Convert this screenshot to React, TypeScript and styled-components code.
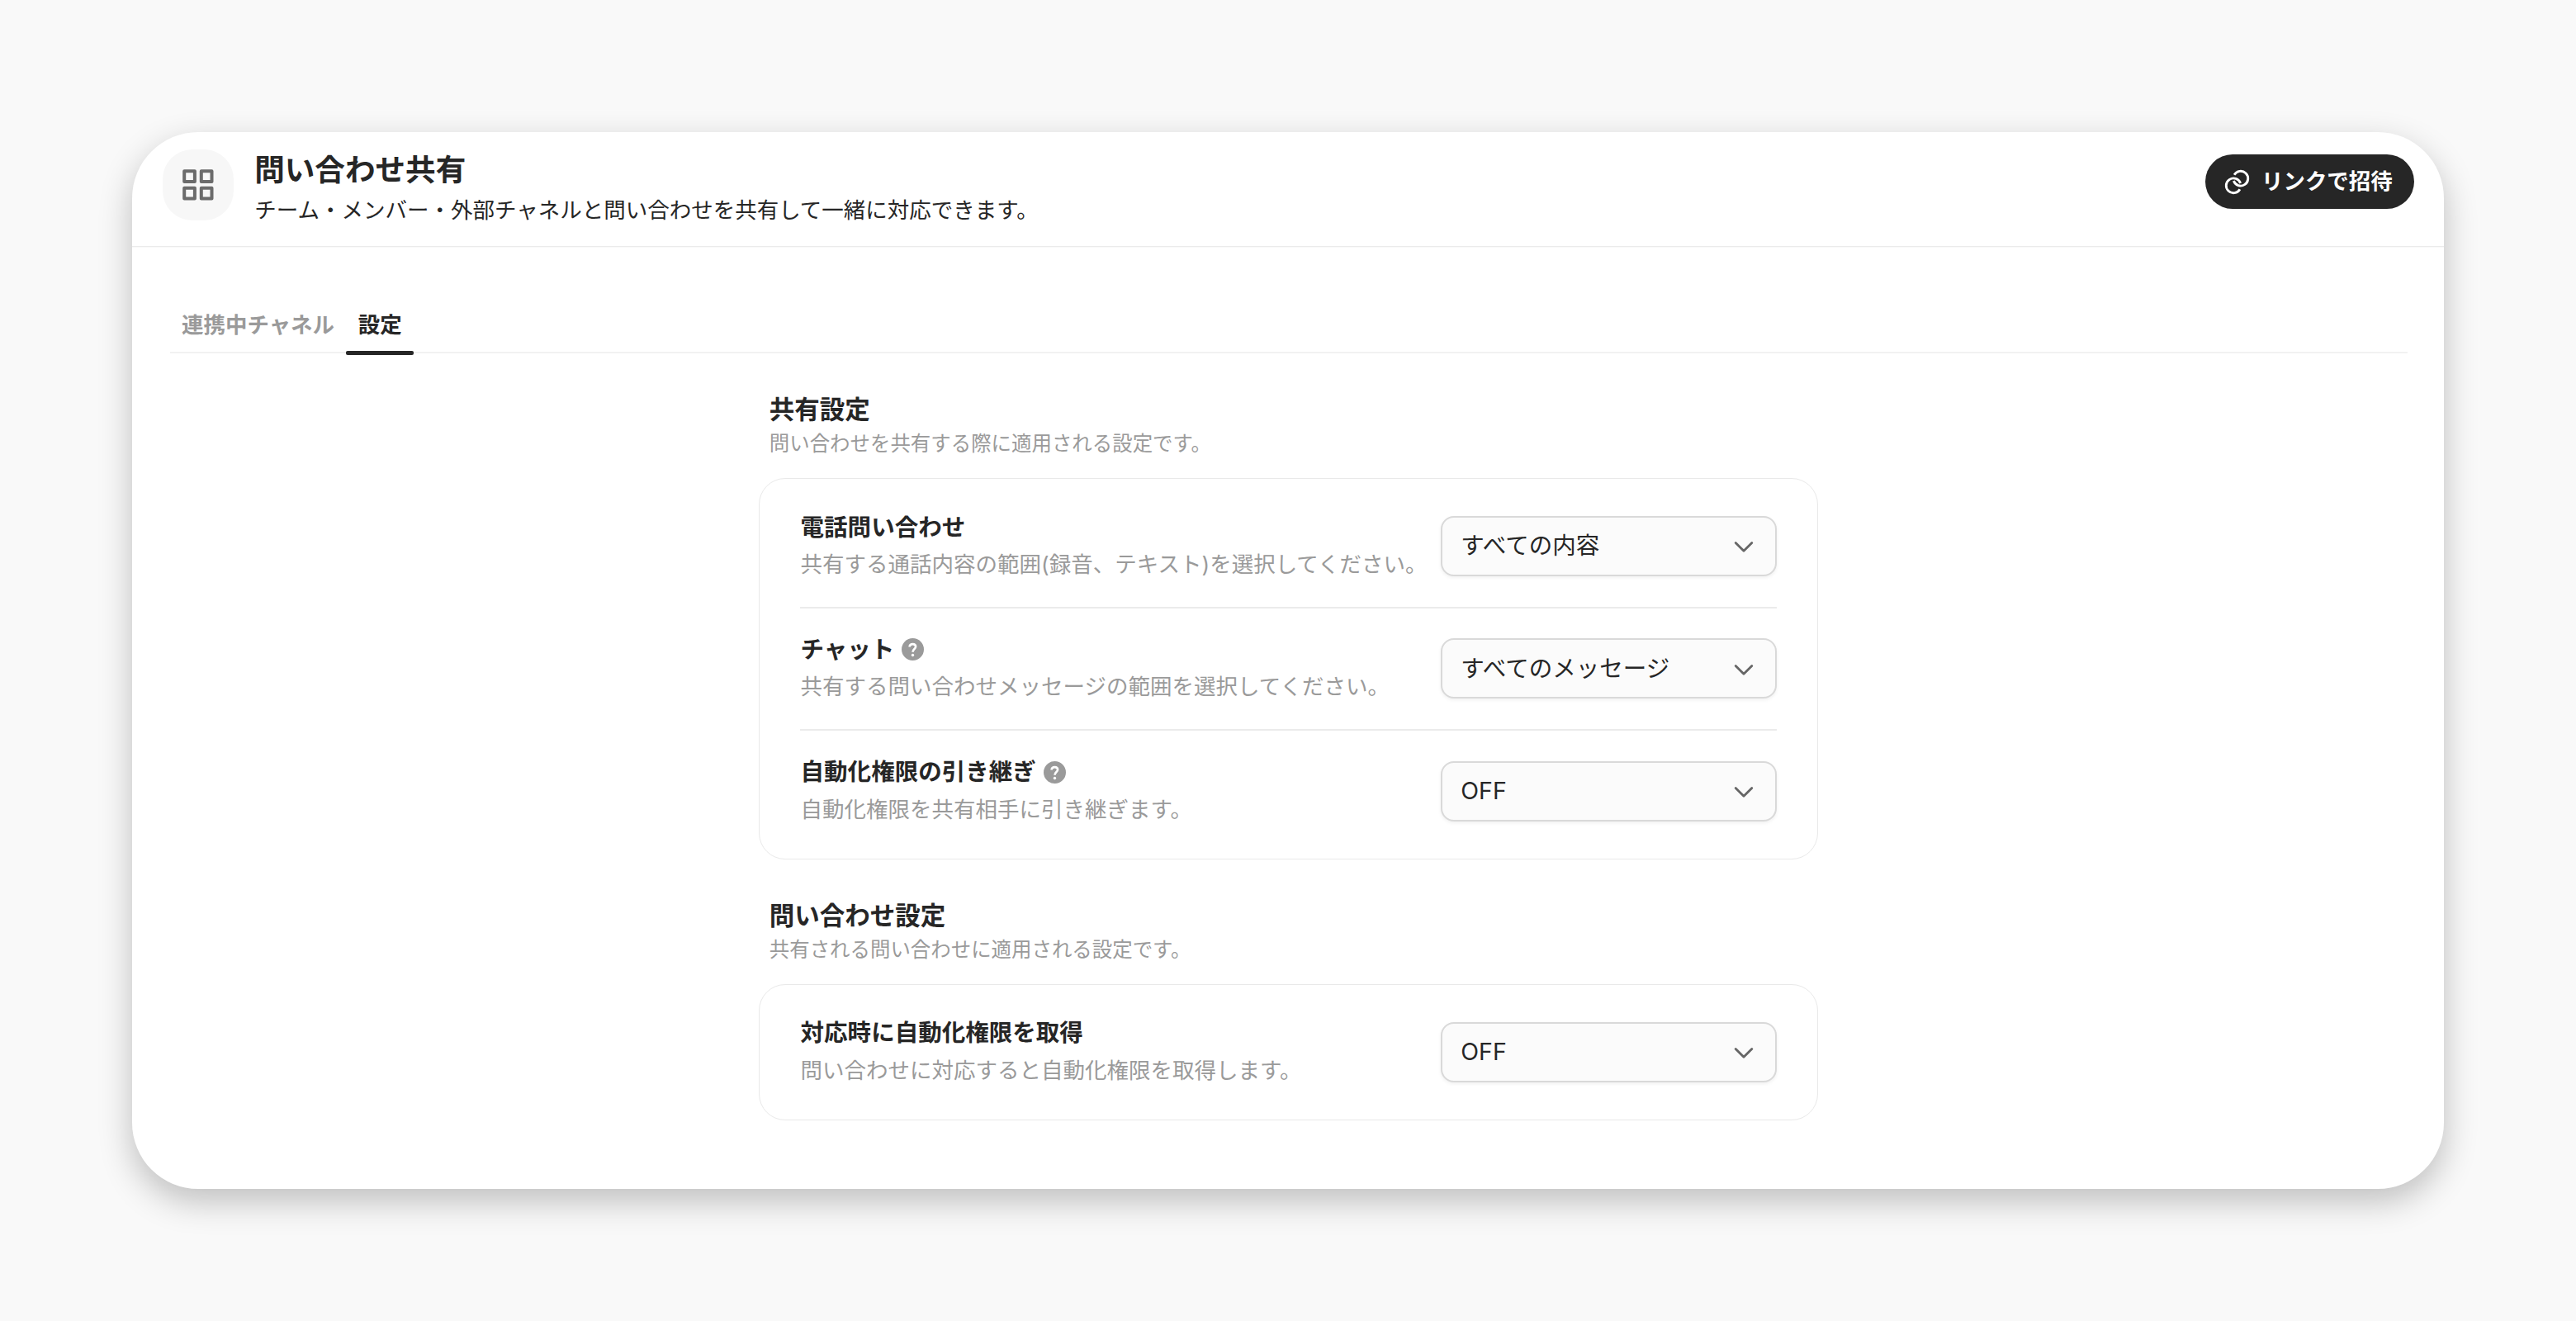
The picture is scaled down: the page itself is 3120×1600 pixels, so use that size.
import React from 'react';
import styled, { createGlobalStyle } from 'styled-components';

const GlobalStyle = createGlobalStyle`
  * { box-sizing: border-box; }
  body {
    margin: 0;
    background: #f9f9f9;
    color: #262626;
    font-family: Inter, "Noto Sans CJK JP", sans-serif;
  }
  h1, h2, h3, p { margin: 0; }
`;

const Page = styled.div`
  width: 3120px;
  height: 1600px;
  padding: 160px;
`;

const Window = styled.main`
  height: 1280px;
  border-radius: 80px;
  background: #fff;
  box-shadow: 0 15px 40px rgba(0, 0, 0, 0.24);
  overflow: hidden;
`;

const Header = styled.header`
  display: flex;
  align-items: flex-start;
  height: 139px;
  padding: 21px 36.3px 0 37.2px;
  border-bottom: 1px solid #ebebeb;
  box-shadow: 0 1px 0 #f8f8f8;
`;

const AppIcon = styled.div`
  display: grid;
  place-items: center;
  width: 86px;
  height: 86px;
  margin-right: 25px;
  border-radius: 36px;
  background: #f7f7f7;
`;

const Heading = styled.div`
  display: flex;
  flex-direction: column;
  flex: 1;
`;

const PageTitle = styled.h1`
  padding-top: 1px;
  font-size: 36.6px;
  line-height: 48px;
  font-weight: 700;
`;

const PageDescription = styled.p`
  margin-top: 5px;
  font-size: 26.5px;
  line-height: 38px;
`;

const InviteButton = styled.button`
  display: flex;
  align-items: center;
  height: 66px;
  width: 252.7px;
  margin-top: 6px;
  padding: 0 0 0 23.4px;
  border: 0;
  border-radius: 33px;
  background: #262626;
  color: #fff;
  font: 700 26.46px/38px Inter, "Noto Sans CJK JP", sans-serif;
  gap: 13.6px;
  white-space: nowrap;
`;

const ButtonLabel = styled.span`
  padding-bottom: 2px;
`;

const Tabs = styled.nav`
  display: flex;
  height: 66px;
  margin: 63.3px 44.3px 0 45.7px;
  border-bottom: 2px solid #f2f2f2;
`;

const Tab = styled.div<{ $active?: boolean }>`
  position: relative;
  height: 68.5px;
  padding: 12px 14.4px 0;
  font-size: 26.46px;
  line-height: 38px;
  font-weight: 700;
  color: ${(p) => (p.$active ? '#262626' : '#9a9a9a')};

  &::after {
    content: '';
    display: ${(p) => (p.$active ? 'block' : 'none')};
    position: absolute;
    left: 0;
    right: 0;
    bottom: 1px;
    height: 4.5px;
    border-radius: 2px;
    background: #262626;
  }
`;

const Content = styled.div`
  display: flex;
  flex-direction: column;
  width: 1283px;
  margin: 48px 0 0 759px;
  gap: 48.2px;
`;

const SectionHead = styled.div`
  height: 102.5px;
  padding-left: 12.8px;
`;

const SectionTitle = styled.h2`
  font-size: 30.5px;
  line-height: 40px;
  font-weight: 700;
`;

const SectionDescription = styled.p`
  margin-top: 3px;
  font-size: 24.45px;
  line-height: 36px;
  color: #9a9a9a;
`;

const Card = styled.div`
  padding: 8.5px 49px;
  border: 1px solid #e9e9e9;
  border-radius: 32px;
`;

const Row = styled.div`
  display: flex;
  align-items: center;
  justify-content: space-between;
  height: 146.4px;

  & + & {
    height: 148.4px;
    border-top: 2px solid #ebebeb;
  }
`;

const RowText = styled.div`
  padding: 0 0 2.6px 0.6px;
`;

const RowTitle = styled.h3`
  display: flex;
  align-items: center;
  gap: 9px;
  font-size: 28.52px;
  line-height: 44px;
  font-weight: 700;
`;

const RowDescription = styled.p`
  margin-top: 1.2px;
  font-size: 26.5px;
  line-height: 42px;
  color: #9a9a9a;
  white-space: nowrap;
`;

const Select = styled.button`
  display: flex;
  align-items: center;
  justify-content: space-between;
  flex: none;
  width: 407px;
  height: 73px;
  padding: 0 26px 0 22.3px;
  border: 2px solid #d9d9d9;
  border-radius: 16px;
  background: #fbfbfb;
  box-shadow: 0 2px 4px rgba(0, 0, 0, 0.06);
  color: #262626;
  font: 400 28.52px/40px Inter, "Noto Sans CJK JP", sans-serif;
`;

const GridIcon = () => (
  <svg width="38" height="38" viewBox="0 0 38 38" fill="none" stroke="#6b6b6b" strokeWidth="4" strokeLinejoin="round">
    <rect x="2.2" y="2.3" width="12.7" height="12.7" />
    <rect x="22.8" y="2.3" width="12.7" height="12.7" />
    <rect x="2.2" y="22.8" width="12.7" height="12.7" />
    <rect x="22.8" y="22.8" width="12.7" height="12.7" />
  </svg>
);

const LinkIcon = () => (
  <svg width="31" height="31" viewBox="0 0 31.3 31.3" fill="none" stroke="#fff" strokeWidth="2.9">
    <path d="M12.2 6.8 A9 9 0 1 1 11.5 14.2" />
    <path d="M19.1 24.5 A9 9 0 1 1 19.8 17.1" />
  </svg>
);

const HelpIcon = () => (
  <svg width="27" height="27" viewBox="0 0 27 27" fill="none">
    <circle cx="13.5" cy="13.5" r="13.5" fill="#9a9a9a" />
    <path d="M9.6 10.5 C9.8 8.3 11.3 7.1 13.4 7.1 C15.6 7.1 17.1 8.4 17.1 10.3 C17.1 13 13.5 13.2 13.5 16.8" stroke="#fff" strokeWidth="2.6" />
    <circle cx="13.5" cy="20.5" r="1.7" fill="#fff" />
  </svg>
);

const ChevronIcon = () => (
  <svg width="24" height="20" viewBox="0 0 24 20" fill="none" stroke="#666" strokeWidth="2.8" strokeLinecap="round" strokeLinejoin="round">
    <path d="M2.2 6.4 L12 16.2 L21.8 6.4" />
  </svg>
);

type Setting = { title: string; description: string; value: string; help?: boolean };
type SectionData = { title: string; description: string; settings: Setting[] };

const sections: SectionData[] = [
  {
    title: '共有設定',
    description: '問い合わせを共有する際に適用される設定です。',
    settings: [
      { title: '電話問い合わせ', description: '共有する通話内容の範囲(録音、テキスト)を選択してください。', value: 'すべての内容' },
      { title: 'チャット', description: '共有する問い合わせメッセージの範囲を選択してください。', value: 'すべてのメッセージ', help: true },
      { title: '自動化権限の引き継ぎ', description: '自動化権限を共有相手に引き継ぎます。', value: 'OFF', help: true },
    ],
  },
  {
    title: '問い合わせ設定',
    description: '共有される問い合わせに適用される設定です。',
    settings: [
      { title: '対応時に自動化権限を取得', description: '問い合わせに対応すると自動化権限を取得します。', value: 'OFF' },
    ],
  },
];

export default function App() {
  return (
    <Page lang="ja">
      <GlobalStyle />
      <Window>
        <Header>
          <AppIcon><GridIcon /></AppIcon>
          <Heading>
            <PageTitle>問い合わせ共有</PageTitle>
            <PageDescription>チーム・メンバー・外部チャネルと問い合わせを共有して一緒に対応できます。</PageDescription>
          </Heading>
          <InviteButton><LinkIcon /><ButtonLabel>リンクで招待</ButtonLabel></InviteButton>
        </Header>
        <Tabs>
          <Tab>連携中チャネル</Tab>
          <Tab $active>設定</Tab>
        </Tabs>
        <Content>
          {sections.map((section) => (
            <section key={section.title}>
              <SectionHead>
                <SectionTitle>{section.title}</SectionTitle>
                <SectionDescription>{section.description}</SectionDescription>
              </SectionHead>
              <Card>
                {section.settings.map((s) => (
                  <Row key={s.title}>
                    <RowText>
                      <RowTitle>{s.title}{s.help && <HelpIcon />}</RowTitle>
                      <RowDescription>{s.description}</RowDescription>
                    </RowText>
                    <Select>{s.value}<ChevronIcon /></Select>
                  </Row>
                ))}
              </Card>
            </section>
          ))}
        </Content>
      </Window>
    </Page>
  );
}
